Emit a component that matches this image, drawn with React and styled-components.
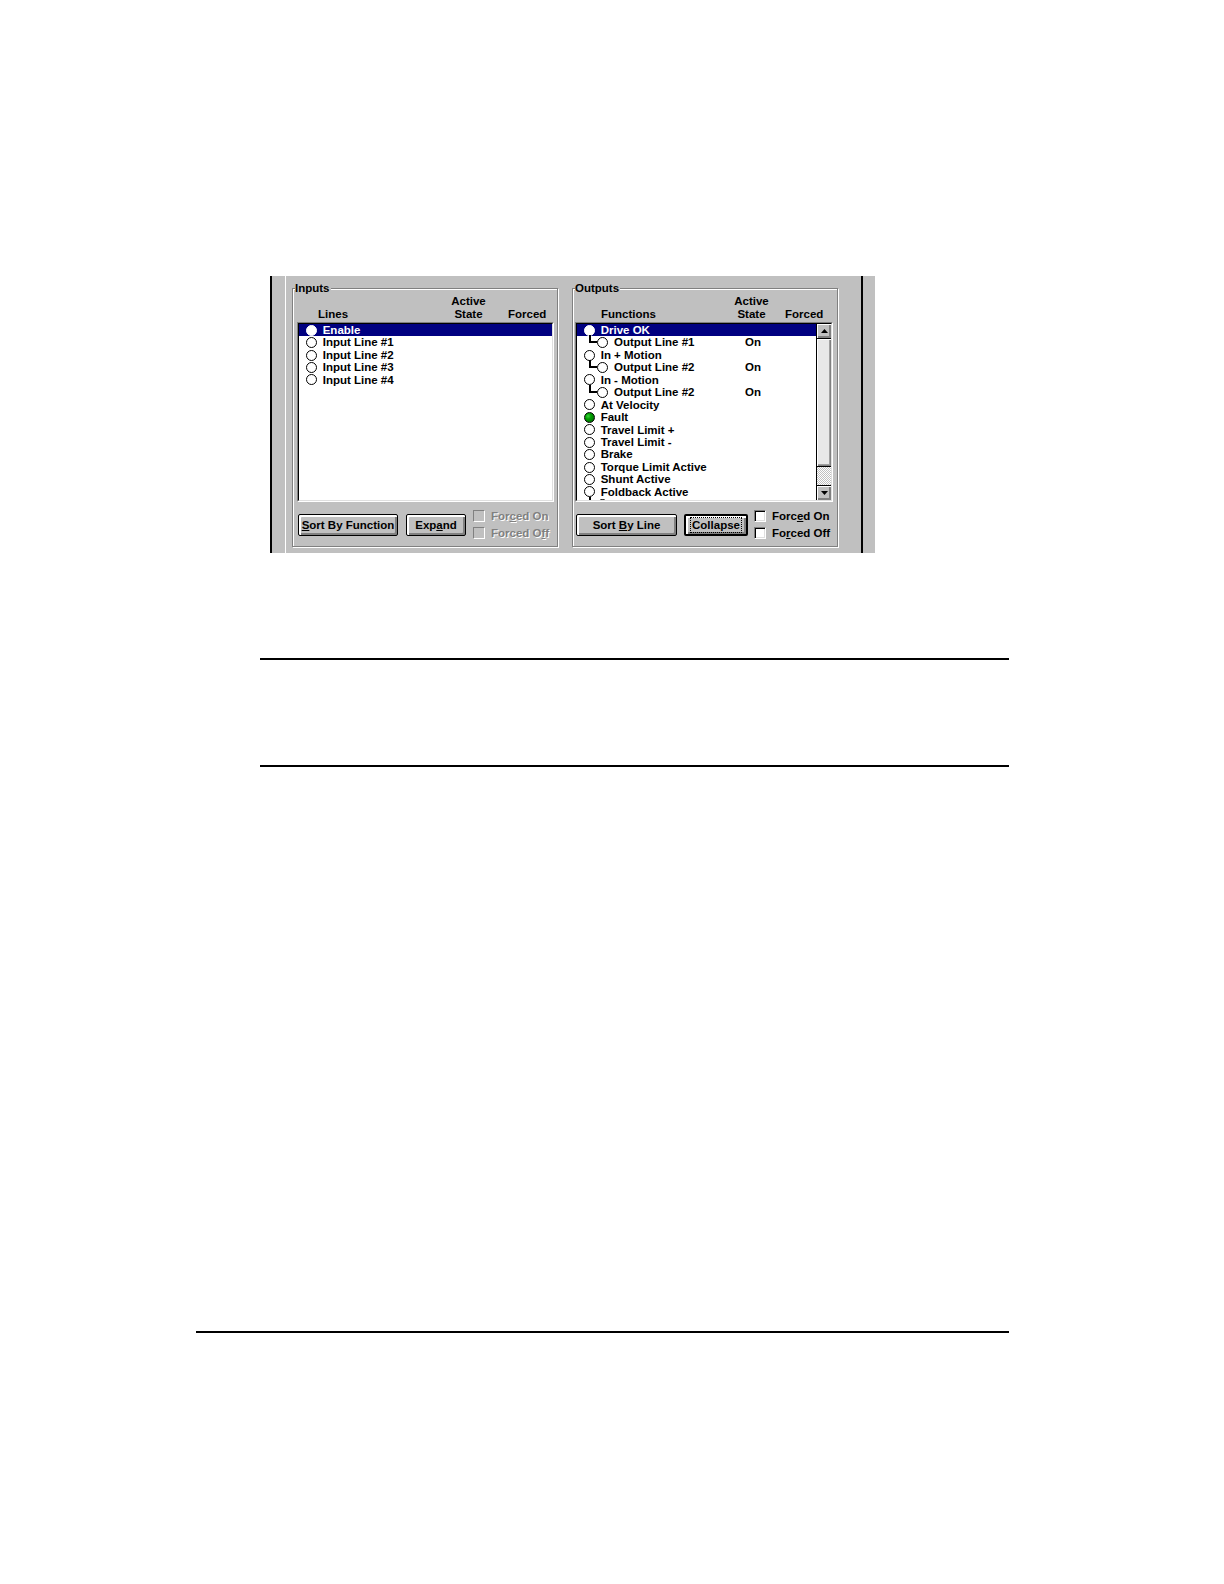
import React from 'react';
import styled, { createGlobalStyle } from 'styled-components';

const Global = createGlobalStyle`
  html, body { margin: 0; padding: 0; background: #fff; }
  body { font-family: "Liberation Sans", Arial, sans-serif; }
`;

const Page = styled.div`
  width: 1224px;
  min-height: 1584px;
  padding-top: 276px;
  box-sizing: border-box;
  overflow: hidden;
`;

const Frame = styled.div`
  margin-left: 270px;
  width: 605px;
  height: 277px;
  background: #c0c0c0;
  display: flex;
  align-items: flex-start;
  font: bold 11.5px "Liberation Sans", Arial, sans-serif;
  color: #000;
`;

const LeftRail = styled.div`
  align-self: stretch;
  width: 13px;
  border-left: 2px solid #000;
  border-right: 1px solid #fff;
  margin-right: 6px;
  flex: none;
`;

const RightRail = styled.div`
  align-self: stretch;
  width: 12px;
  margin-left: 23px;
  border-left: 2px solid #000;
  flex: none;
`;

const GroupBox = styled.div`
  position: relative;
  box-sizing: border-box;
  flex: none;
  width: ${p => p.$w}px;
  height: 259px;
  margin-top: 12px;
  margin-right: ${p => p.$mr || 0}px;
  border: 1px solid #808080;
  box-shadow: inset 1px 1px 0 #fff, 1px 1px 0 #fff;
  padding: 6px 0 0 ${p => p.$pl}px;
  display: flex;
  flex-direction: column;
`;

const Legend = styled.span`
  position: absolute;
  top: -7px;
  left: 2px;
  padding-right: 1px;
  background: #c0c0c0;
  line-height: 13px;
`;

const Header = styled.div`
  display: grid;
  grid-template-columns: ${p => p.$cols};
  align-items: end;
  height: 26px;
  line-height: 13px;
  margin-bottom: 1px;
`;

const HeadCell = styled.div`
  padding-left: ${p => p.$pl || 0}px;
  text-align: ${p => (p.$center ? 'center' : 'left')};
  white-space: nowrap;
`;

const ListOuter = styled.div`
  box-sizing: border-box;
  width: ${p => p.$w}px;
  height: 180px;
  border: 1px solid;
  border-color: #808080 #fff #fff #808080;
  flex: none;
`;

const ListInner = styled.div`
  box-sizing: border-box;
  height: 100%;
  border: 1px solid;
  border-color: #000 #dfdfdf #dfdfdf #000;
  background: #fff;
  display: flex;
  overflow: hidden;
`;

const Items = styled.div`
  flex: 1;
  overflow: hidden;
`;

const Row = styled.div`
  height: 12.45px;
  line-height: 12.45px;
  display: grid;
  grid-template-columns: 168px auto;
  align-items: center;
  white-space: nowrap;
  background: ${p => (p.$selected ? '#000080' : 'transparent')};
  color: ${p => (p.$selected ? '#fff' : '#000')};
`;

const Name = styled.div`
  display: flex;
  align-items: center;
  height: 100%;
  padding-left: ${p => (p.$child ? 12 : 7)}px;
`;

const Connector = styled.span`
  flex: none;
  align-self: flex-start;
  width: 6px;
  height: 6px;
  margin-top: -1px;
  border-left: 2px solid #000;
  border-bottom: 2px solid #000;
`;

const Circle = styled.span`
  flex: none;
  box-sizing: border-box;
  width: 11px;
  height: 11px;
  border-radius: 50%;
  margin-right: ${p => (p.$child ? 6 : 5.7)}px;
  border: 1px solid ${p => (p.$fill === 'white' ? '#fff' : '#000')};
  background: ${p =>
    p.$fill === 'white'
      ? '#fff'
      : p.$fill === 'green'
      ? 'radial-gradient(circle at 35% 35%, #3fd03f 0, #00a000 35%, #005800 100%)'
      : 'transparent'};
`;

const ScrollBar = styled.div`
  flex: none;
  width: 14px;
  display: flex;
  flex-direction: column;
  border-left: 1px solid #000;
  background: #c0c0c0;
`;

const ScrollBtn = styled.div`
  box-sizing: border-box;
  height: 15px;
  flex: none;
  display: flex;
  align-items: center;
  justify-content: center;
  background: #c0c0c0;
  border-top: ${p => (p.$down ? '1px solid #000' : '0')};
  border-bottom: ${p => (p.$down ? '0' : '1px solid #000')};
  box-shadow: inset 1px 1px 0 #fff, inset -1px -1px 0 #808080, inset -2px -2px 0 #808080;
`;

const Thumb = styled.div`
  box-sizing: border-box;
  height: 128px;
  flex: none;
  background: #e8e8e8;
  border-bottom: 1px solid #000;
  box-shadow: inset 1px 1px 0 #fff, inset -1px -1px 0 #808080, inset -2px -2px 0 #a0a0a0;
`;

const Track = styled.div`
  flex: 1;
  background: repeating-conic-gradient(#ffffff 0 25%, #c0c0c0 0 50%) 0 0 / 2px 2px;
`;

const Controls = styled.div`
  display: flex;
  align-items: center;
  height: 29px;
  margin-top: 8px;
  padding-left: 1px;
`;

const Button = styled.button`
  box-sizing: border-box;
  flex: none;
  width: ${p => p.$w}px;
  height: 22px;
  margin-right: ${p => p.$mr}px;
  padding: 0;
  font: inherit;
  color: #000;
  background: #c0c0c0;
  border: ${p => (p.$default ? 2 : 1)}px solid #000;
  border-radius: 2px;
  box-shadow: inset 1px 1px 0 #fff, inset 2px 2px 0 #fff, inset -1px -1px 0 #808080,
    inset -2px -2px 0 #808080;
  display: flex;
  align-items: center;
  justify-content: center;
`;

const Focus = styled.span`
  outline: 1px dotted #000;
  outline-offset: 0;
  padding: 0 1px;
  line-height: 14px;
`;

const Checks = styled.div`
  display: flex;
  flex-direction: column;
  gap: 5px;
`;

const CheckRow = styled.div`
  display: flex;
  align-items: center;
  height: 12px;
  white-space: nowrap;
  color: ${p => (p.$disabled ? '#808080' : '#000')};
  text-shadow: ${p => (p.$disabled ? '1px 1px 0 #fff' : 'none')};
`;

const Box = styled.span`
  box-sizing: border-box;
  flex: none;
  width: 12px;
  height: 12px;
  margin-right: 6px;
  background: ${p => (p.$disabled ? '#c0c0c0' : '#fff')};
  border: 1px solid;
  border-color: #808080 #fff #fff #808080;
  box-shadow: ${p =>
    p.$disabled ? 'inset 1px 1px 0 #c0c0c0' : 'inset 1px 1px 0 #000, inset -1px -1px 0 #dfdfdf'};
`;

const Rule = styled.hr`
  margin: ${p => p.$mt}px 0 0 ${p => p.$ml}px;
  width: ${p => p.$w}px;
  height: 2px;
  border: 0;
  padding: 0;
  background: #000;
`;

const Arrow = ({ down }) => (
  <svg width="7" height="4" viewBox="0 0 7 4">
    <polygon points={down ? '0,0 7,0 3.5,4' : '0,4 7,4 3.5,0'} fill="#000" />
  </svg>
);

const inputs = [
  { label: 'Enable', selected: true, fill: 'white' },
  { label: 'Input Line #1' },
  { label: 'Input Line #2' },
  { label: 'Input Line #3' },
  { label: 'Input Line #4' },
];

const outputs = [
  { label: 'Drive OK', selected: true, fill: 'white' },
  { label: 'Output Line #1', child: true, state: 'On' },
  { label: 'In + Motion' },
  { label: 'Output Line #2', child: true, state: 'On' },
  { label: 'In - Motion' },
  { label: 'Output Line #2', child: true, state: 'On' },
  { label: 'At Velocity' },
  { label: 'Fault', fill: 'green' },
  { label: 'Travel Limit +' },
  { label: 'Travel Limit -' },
  { label: 'Brake' },
  { label: 'Torque Limit Active' },
  { label: 'Shunt Active' },
  { label: 'Foldback Active' },
  { label: 'Output Line #3', child: true, state: 'On' },
];

const ListRows = ({ rows }) =>
  rows.map((r, i) => (
    <Row key={i} $selected={r.selected}>
      <Name $child={r.child}>
        {r.child && <Connector />}
        <Circle $fill={r.fill} $child={r.child} />
        <span>{r.label}</span>
      </Name>
      <span>{r.state || ''}</span>
    </Row>
  ));

export default function App() {
  return (
    <Page>
      <Global />
      <Frame>
        <LeftRail />
        <GroupBox $w={266} $mr={14} $pl={4}>
          <Legend>Inputs</Legend>
          <Header $cols="150px 43px 1fr">
            <HeadCell $pl={21}>Lines</HeadCell>
            <HeadCell $center>
              Active
              <br />
              State
            </HeadCell>
            <HeadCell $pl={18}>Forced</HeadCell>
          </Header>
          <ListOuter $w={257}>
            <ListInner>
              <Items>
                <ListRows rows={inputs} />
              </Items>
            </ListInner>
          </ListOuter>
          <Controls>
            <Button $w={100} $mr={8}>
              <span>
                <u>S</u>ort By Function
              </span>
            </Button>
            <Button $w={60} $mr={7}>
              <span>
                Exp<u>a</u>nd
              </span>
            </Button>
            <Checks>
              <CheckRow $disabled>
                <Box $disabled />
                <span>
                  For<u>c</u>ed On
                </span>
              </CheckRow>
              <CheckRow $disabled>
                <Box $disabled />
                <span>
                  Forced O<u>f</u>f
                </span>
              </CheckRow>
            </Checks>
          </Controls>
        </GroupBox>

        <GroupBox $w={266} $pl={2}>
          <Legend>Outputs</Legend>
          <Header $cols="155px 43px 1fr">
            <HeadCell $pl={26}>Functions</HeadCell>
            <HeadCell $center>
              Active
              <br />
              State
            </HeadCell>
            <HeadCell $pl={12}>Forced</HeadCell>
          </Header>
          <ListOuter $w={258}>
            <ListInner>
              <Items>
                <ListRows rows={outputs} />
              </Items>
              <ScrollBar>
                <ScrollBtn>
                  <Arrow />
                </ScrollBtn>
                <Thumb />
                <Track />
                <ScrollBtn $down>
                  <Arrow down />
                </ScrollBtn>
              </ScrollBar>
            </ListInner>
          </ListOuter>
          <Controls>
            <Button $w={101} $mr={7}>
              <span>
                Sort <u>B</u>y Line
              </span>
            </Button>
            <Button $w={64} $mr={6} $default>
              <Focus>Collapse</Focus>
            </Button>
            <Checks>
              <CheckRow>
                <Box />
                <span>
                  Forc<u>e</u>d On
                </span>
              </CheckRow>
              <CheckRow>
                <Box />
                <span>
                  Fo<u>r</u>ced Off
                </span>
              </CheckRow>
            </Checks>
          </Controls>
        </GroupBox>
        <RightRail />
      </Frame>
      <Rule $mt={105} $ml={260} $w={749} />
      <Rule $mt={105} $ml={260} $w={749} />
      <Rule $mt={564} $ml={196} $w={813} />
    </Page>
  );
}
